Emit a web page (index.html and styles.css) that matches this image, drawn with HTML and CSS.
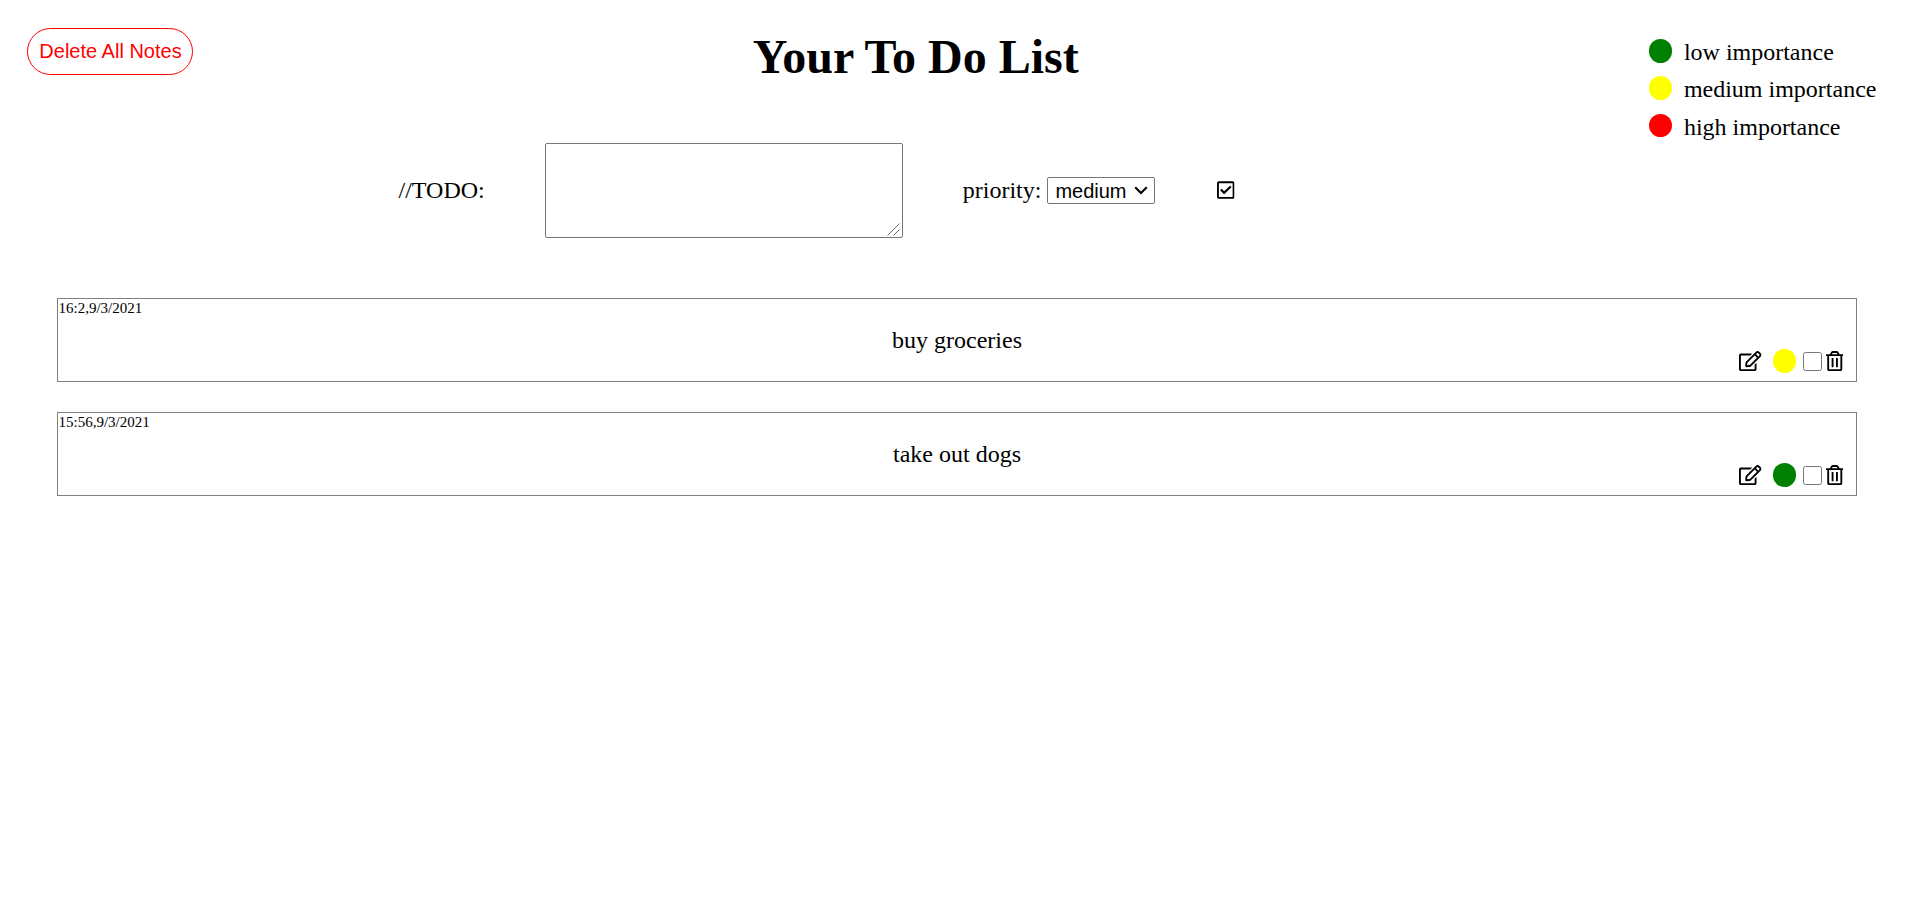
FILE: index.html
```html
<!DOCTYPE html>
<html lang="en">
<head>
<meta charset="utf-8">
<title>Your To Do List</title>
<link rel="stylesheet" href="styles.css">
</head>
<body>
<svg class="sprite" aria-hidden="true">
  <symbol id="edit" viewBox="0 0 576 512"><path d="M402.3 344.9l32-32c5-5 13.7-1.5 13.7 5.7V464c0 26.5-21.5 48-48 48H48c-26.5 0-48-21.5-48-48V112c0-26.5 21.5-48 48-48h273.5c7.1 0 10.7 8.6 5.7 13.7l-32 32c-1.5 1.5-3.5 2.3-5.7 2.3H48v352h352V350.5c0-2.1.8-4.1 2.3-5.6zm156.6-201.8L296.3 405.7l-90.4 10c-26.2 2.9-48.5-19.2-45.6-45.6l10-90.4L432.9 17.1c22.9-22.9 59.9-22.9 82.7 0l43.2 43.2c22.9 22.9 22.9 60 .1 82.8zM460.1 174L402 115.9 216.2 301.8l-7.3 65.3 65.3-7.3L460.1 174zm64.8-79.7l-43.2-43.2c-4.1-4.1-10.8-4.1-14.8 0L436 82l58.1 58.1 30.9-30.9c4-4.2 4-10.8-.1-14.9z"/></symbol>
  <symbol id="trash" viewBox="0 0 448 512"><path d="M268 416h24a12 12 0 0 0 12-12V188a12 12 0 0 0-12-12h-24a12 12 0 0 0-12 12v216a12 12 0 0 0 12 12zM432 80h-82.41l-34-56.7A48 48 0 0 0 274.41 0H173.59a48 48 0 0 0-41.16 23.3L98.41 80H16A16 16 0 0 0 0 96v16a16 16 0 0 0 16 16h16v336a48 48 0 0 0 48 48h288a48 48 0 0 0 48-48V128h16a16 16 0 0 0 16-16V96a16 16 0 0 0-16-16zM171.84 50.91A6 6 0 0 1 177 48h94a6 6 0 0 1 5.15 2.91L293.61 80H154.39zM368 464H80V128h288zm-212-48h24a12 12 0 0 0 12-12V188a12 12 0 0 0-12-12h-24a12 12 0 0 0-12 12v216a12 12 0 0 0 12 12z"/></symbol>
  <symbol id="check" viewBox="0 0 448 512"><path d="M400 32H48C21.49 32 0 53.49 0 80v352c0 26.51 21.49 48 48 48h352c26.51 0 48-21.49 48-48V80c0-26.51-21.49-48-48-48zm0 400H48V80h352v352zm-35.864-241.724L191.547 361.48c-4.705 4.667-12.303 4.637-16.97-.068l-90.781-91.516c-4.667-4.705-4.637-12.303.069-16.971l22.719-22.536c4.705-4.667 12.303-4.637 16.97.069l59.792 60.277 141.352-140.216c4.705-4.667 12.303-4.637 16.97.068l22.536 22.718c4.667 4.706 4.637 12.304-.068 16.971z"/></symbol>
</svg>
<header class="header">
  <button class="delete-all">Delete All Notes</button>
  <h1 class="title">Your To Do List</h1>
  <ul class="legend">
    <li class="legend-item"><span class="dot low"></span>low importance</li>
    <li class="legend-item"><span class="dot medium"></span>medium importance</li>
    <li class="legend-item"><span class="dot high"></span>high importance</li>
  </ul>
</header>
<form class="note-form">
  <label for="todo">//TODO:</label>
  <div class="field">
    <textarea class="todo-input" id="todo"></textarea>
    <svg class="grip" viewBox="0 0 13 13"><path d="M.5 12.5l12-12M6.5 12.5l6-6"/></svg>
  </div>
  <div class="priority">
    <label for="priority">priority:</label>
    <div class="field">
      <select class="priority-select" id="priority">
        <option>low</option>
        <option selected>medium</option>
        <option>high</option>
      </select>
      <svg class="chevron" viewBox="0 0 14 9"><path d="M1.2 1.2L7 7l5.8-5.8"/></svg>
    </div>
  </div>
  <svg class="icon icon-check"><use href="#check"/></svg>
</form>
<main class="notes">
  <article class="note">
    <time class="note-time">16:2,9/3/2021</time>
    <p class="note-text">buy groceries</p>
    <div class="note-tools">
      <svg class="icon icon-edit"><use href="#edit"/></svg>
      <span class="dot medium"></span>
      <input class="done" type="checkbox">
      <svg class="icon icon-trash"><use href="#trash"/></svg>
    </div>
  </article>
  <article class="note">
    <time class="note-time">15:56,9/3/2021</time>
    <p class="note-text">take out dogs</p>
    <div class="note-tools">
      <svg class="icon icon-edit"><use href="#edit"/></svg>
      <span class="dot low"></span>
      <input class="done" type="checkbox">
      <svg class="icon icon-trash"><use href="#trash"/></svg>
    </div>
  </article>
</main>
</body>
</html>
```
FILE: styles.css
```css
* { box-sizing: border-box; }

body {
  margin: 0;
  background: #fff;
  color: #000;
  font: 24px/27px "Liberation Serif", "Times New Roman", serif;
}

.sprite { display: none; }

.header {
  display: flex;
  justify-content: space-between;
  align-items: flex-start;
  height: 143px;
  padding: 28px 40.5px 0 27px;
}

.delete-all {
  width: 166px;
  height: 47px;
  padding: 0 0 0 1px;
  border: 1px solid red;
  border-radius: 24px;
  background: #fff;
  color: red;
  font: 20px "Liberation Sans", Arial, sans-serif;
  white-space: nowrap;
}

.title {
  margin: 1px 10px 0 0;
  font-size: 48px;
  line-height: 55px;
}

.legend {
  display: flex;
  flex-direction: column;
  gap: 10.4px;
  margin: 11px 0 0;
  padding: 0;
  list-style: none;
}

.legend-item {
  display: flex;
  gap: 12px;
}

.dot {
  flex: none;
  width: 23.25px;
  height: 23.25px;
  border-radius: 50%;
}

.low { background: green; }
.medium { background: yellow; }
.high { background: red; }

.legend .low,
.legend .high { margin-top: .4px; }

.note-form {
  display: flex;
  align-items: center;
  gap: 60px;
  padding-left: 398.5px;
}

.field {
  position: relative;
  display: flex;
}

.todo-input {
  width: 358px;
  height: 95px;
  margin: 0;
  border: 1px solid #767676;
  border-radius: 2px;
  resize: none;
}

.grip {
  position: absolute;
  right: 3px;
  bottom: 2px;
  width: 13px;
  height: 13px;
  fill: none;
  stroke: #666;
}

.priority {
  display: flex;
  align-items: center;
  gap: 6px;
}

.priority-select {
  width: 108px;
  height: 27px;
  padding: 0 0 0 7px;
  border: 1px solid #767676;
  border-radius: 2px;
  background: #fff;
  color: #000;
  font: 20px "Liberation Sans", Arial, sans-serif;
  appearance: none;
}

.chevron {
  position: absolute;
  top: 9px;
  right: 7px;
  width: 14px;
  height: 9px;
  fill: none;
  stroke: #000;
  stroke-width: 2;
  pointer-events: none;
}

.icon {
  flex: none;
  height: 20px;
  fill: #000;
}

.icon-check { width: 17.5px; margin: 0 0 2px 2px; }
.icon-edit { width: 22.5px; }
.icon-trash { width: 17.5px; }

.notes {
  display: flex;
  flex-direction: column;
  gap: 30px;
  padding: 60px 60px 0 57px;
}

.note {
  display: grid;
  grid-template-rows: 17px 41px 24px;
  height: 84px;
  border: 1px solid gray;
}

.note-time {
  padding-left: .5px;
  font-size: 15px;
  line-height: 18px;
}

.note-text {
  margin: 11px 0 0;
  text-align: center;
}

.note-tools {
  display: flex;
  align-items: center;
  justify-content: flex-end;
  height: 24px;
  margin-top: -8px;
  padding-right: 13px;
}

.note-tools .dot { margin: 0 7px 0 11px; }

.done {
  width: 19px;
  height: 19px;
  margin: 0 3.5px 0 0;
}
```
